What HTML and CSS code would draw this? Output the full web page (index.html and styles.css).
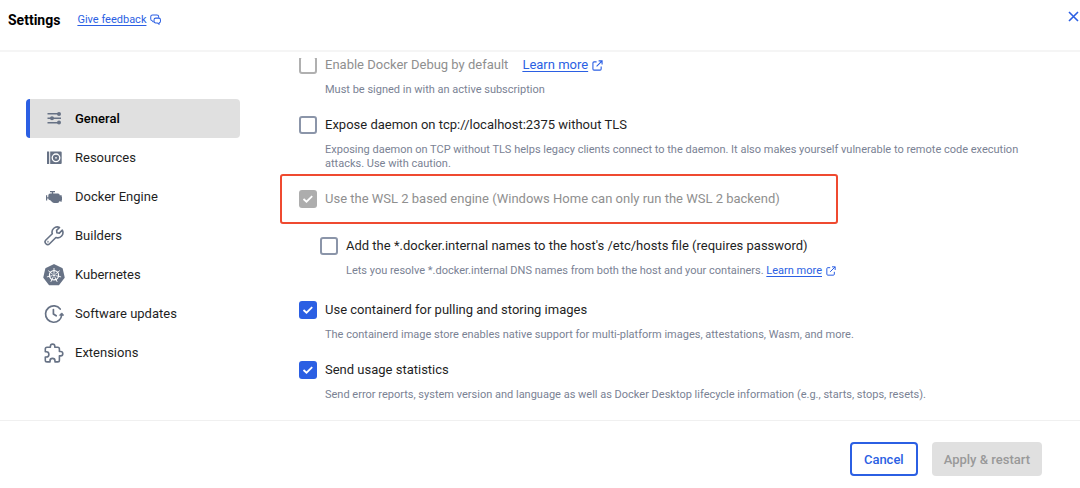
FILE: index.html
```html
<!DOCTYPE html>
<html lang="en">
<head>
    <meta charset="UTF-8">
    <meta name="viewport" content="width=device-width, initial-scale=1.0">
    <title>Settings</title>
    <link rel="stylesheet" href="styles.css">
</head>
<body>
    <svg class="sprite" aria-hidden="true">
        <symbol id="external" viewBox="0 0 12 12">
            <path d="M5 2H2.200Q1 2 1 3.200V9.800Q1 11 2.200 11H8.800Q10 11 10 9.800V7M7.200 1H11V4.800M11 1L5 7" fill="none" stroke="currentColor" stroke-width="1.200"/>
        </symbol>
    </svg>

    <header class="header">
        <h1 class="title">Settings</h1>
        <a class="link feedback" href="#"><span>Give feedback</span>
            <svg width="11" height="11" viewBox="0 0 12 12" fill="none" stroke="currentColor" stroke-width="1.100" stroke-linejoin="round">
                <path d="M3.800 8.800L2.500 7.500Q.8 7.200.8 5.500V3Q.8 1 2.800 1H7.500Q9.500 1 9.500 3V4"/>
                <path d="M6.200 4.500H9.500Q11.400 4.500 11.400 6.300V7.800Q11.400 9.500 10 9.600V11.300L8 9.700H6.200Q4.400 9.700 4.400 7.900V6.300Q4.400 4.500 6.200 4.500Z"/>
            </svg>
        </a>
        <button class="close" type="button" aria-label="Close">
            <svg width="11" height="11" viewBox="0 0 11 11" fill="none" stroke="currentColor" stroke-width="1.600"><path d="M1 1L10 10M10 1L1 10"/></svg>
        </button>
    </header>

    <main class="main">
        <nav class="nav">
            <a class="nav-item active" href="#">
                <svg class="icon" viewBox="0 0 20 20" fill="currentColor">
                    <path d="M3.500 4h11v1.400h-11zM3.500 8.500h13.500v1.400h-13.500zM3.500 13h11v1.400h-11z"/>
                    <circle cx="15" cy="4.900" r="2"/>
                    <circle cx="8" cy="9.200" r="2"/>
                    <circle cx="15" cy="13.500" r="2"/>
                </svg>
                General
            </a>
            <a class="nav-item" href="#">
                <svg class="icon" viewBox="0 0 20 20">
                    <path d="M3 3.500h2.200v12.500H3zM6.200 3.500h10.500q1 0 1 1v10.500q0 1-1 1H6.200z" fill="currentColor"/>
                    <circle cx="12" cy="9.800" r="3.800" fill="none" stroke="#fff" stroke-width="1.300"/>
                    <circle cx="12" cy="9.800" r=".9" fill="#fff"/>
                </svg>
                Resources
            </a>
            <a class="nav-item" href="#">
                <svg class="icon" viewBox="0 0 20 20" fill="currentColor">
                    <path d="M6 4h5v1.200H9.200v1.400H14q1.600.2 1.900 1.900h.6V8h1v1.500h.5v4h-.5V15h-1v-1h-.8Q15 16 13.300 16H10.500Q9 16 7.800 14.700L6.300 13.200Q4.300 13.200 4.300 11.500H3.200v2H2V8.300h1.200v2h1.100V8.500Q4.400 6.700 6.200 6.600H7.800V5.200H6z"/>
                </svg>
                Docker Engine
            </a>
            <a class="nav-item" href="#">
                <svg class="icon" viewBox="0 0 20 20" fill="none" stroke="currentColor" stroke-width="1.600" stroke-linejoin="round" stroke-linecap="round">
                    <path d="M15.500 1.500A5.200 5.200 0 0 0 8.300 7.800L1.900 14A2.600 2.600 0 0 0 5.600 17.700L11.900 11.500A5.200 5.200 0 0 0 18.300 4.200L15.300 7.100L12.900 6.800L12.600 4.400Z"/>
                    <circle cx="3.900" cy="15.800" r=".2"/>
                </svg>
                Builders
            </a>
            <a class="nav-item" href="#">
                <svg class="icon kubernetes" viewBox="0 0 22 22">
                    <path d="M11 1L18.800 4.700L20.800 13.400L15.400 20.400H6.600L1.200 13.400L3.200 4.700Z" fill="currentColor" stroke="currentColor" stroke-width="1.800" stroke-linejoin="round"/>
                    <g fill="none" stroke="#fff" stroke-width=".9">
                        <circle cx="11" cy="11.300" r="4.600" stroke-width="1.200"/>
                        <path d="M11 9.800V4M12.200 10.300L16.700 6.700M12.500 11.600L18.100 12.900M11.700 12.700L14.200 17.900M10.300 12.700L7.800 17.900M9.500 11.600L3.900 12.900M9.800 10.300L5.300 6.700"/>
                    </g>
                    <circle cx="11" cy="11.300" r="1" fill="#fff"/>
                </svg>
                Kubernetes
            </a>
            <a class="nav-item" href="#">
                <svg class="icon" viewBox="0 0 20 20" fill="none" stroke="currentColor" stroke-width="1.700" stroke-linecap="round" stroke-linejoin="round">
                    <path d="M16.200 5A8.200 8.200 0 1 0 15.200 16.200Q17.300 14.300 17.600 11.500M9.400 5.500V10L12.200 11.800"/>
                    <path d="M15.800 11L17.700 8.900L19.400 11Z" fill="currentColor" stroke-width="1"/>
                </svg>
                Software updates
            </a>
            <a class="nav-item" href="#">
                <svg class="icon" viewBox="0 0 20 20" fill="none" stroke="currentColor" stroke-width="1.600" stroke-linejoin="round">
                    <path d="M6.400 4.300V3.300A2.200 2.200 0 0 1 10.800 3.300V4.300H13.700Q15.400 4.300 15.400 6V8.500H16.600A2.200 2.200 0 0 1 16.600 12.900H15.400V17.200Q15.400 18.900 13.700 18.900H11V17.900A2.500 2.500 0 0 0 6 17.900V18.900H3Q1.300 18.900 1.300 17.200V14H2.300A2.600 2.600 0 0 0 2.300 8.800H1.300V6Q1.300 4.300 3 4.300Z"/>
                </svg>
                Extensions
            </a>
        </nav>

        <section class="content">
            <div class="options">
                <div class="option">
                    <div class="option-row">
                        <label class="check disabled"><input type="checkbox" disabled>Enable Docker Debug by default</label>
                        <a class="link" href="#"><span>Learn more</span><svg width="11" height="11"><use href="#external"/></svg></a>
                    </div>
                    <p class="hint">Must be signed in with an active subscription</p>
                </div>

                <div class="option">
                    <label class="check"><input type="checkbox">Expose daemon on tcp://localhost:2375 without TLS</label>
                    <p class="hint">Exposing daemon on TCP without TLS helps legacy clients connect to the daemon. It also makes yourself vulnerable to remote code execution attacks. Use with caution.</p>
                </div>

                <div class="highlight">
                    <label class="check disabled"><input type="checkbox" checked disabled>Use the WSL 2 based engine (Windows Home can only run the WSL 2 backend)</label>
                </div>

                <div class="option nested">
                    <label class="check"><input type="checkbox">Add the *.docker.internal names to the host's /etc/hosts file (requires password)</label>
                    <p class="hint">Lets you resolve *.docker.internal DNS names from both the host and your containers. <a class="link" href="#"><span>Learn more</span><svg width="10" height="10"><use href="#external"/></svg></a></p>
                </div>

                <div class="option">
                    <label class="check"><input type="checkbox" checked>Use containerd for pulling and storing images</label>
                    <p class="hint">The containerd image store enables native support for multi-platform images, attestations, Wasm, and more.</p>
                </div>

                <div class="option">
                    <label class="check"><input type="checkbox" checked>Send usage statistics</label>
                    <p class="hint">Send error reports, system version and language as well as Docker Desktop lifecycle information (e.g., starts, stops, resets).</p>
                </div>
            </div>
        </section>
    </main>

    <footer class="footer">
        <button class="btn btn-outline" type="button">Cancel</button>
        <button class="btn btn-disabled" type="button" disabled>Apply &amp; restart</button>
    </footer>
</body>
</html>
```

FILE: styles.css
```css
:root {
    --blue: #2b5fe3;
    --slate: #677285;
    --hint: #7a8294;
    --text: #1f1f1f;
    --muted: #8f8f8f;
    --line: #f0f0f0;
}

* {
    box-sizing: border-box;
    margin: 0;
    padding: 0;
}

body {
    height: 100vh;
    display: flex;
    flex-direction: column;
    background: #fff;
    color: var(--text);
    font-family: Roboto, "Liberation Sans", sans-serif;
    font-size: 13px;
    line-height: 20px;
}

.sprite {
    display: none;
}

/* header */
.header {
    display: flex;
    align-items: center;
    height: 52px;
    padding: 0 0 11px 8px;
    border-bottom: 2px solid #f5f5f5;
}

.title {
    font-size: 14px;
    font-weight: 700;
    color: #000;
}

.link {
    display: inline-flex;
    align-items: center;
    gap: 4px;
    color: var(--blue);
    text-decoration: none;
}

.link span {
    text-decoration: underline;
    text-underline-offset: 2px;
}

.feedback {
    margin-left: 17px;
    font-size: 11px;
}

.close {
    display: flex;
    margin: 0 1px 6px auto;
    border: none;
    background: none;
    color: var(--blue);
    cursor: pointer;
}

/* body */
.main {
    flex: 1;
    min-height: 0;
    display: flex;
    padding-top: 6px;
}

.nav {
    flex: 0 0 240px;
    padding: 41px 0 0 26px;
}

.nav-item {
    display: flex;
    align-items: center;
    gap: 11px;
    height: 39px;
    padding-left: 14px;
    border-left: 4px solid transparent;
    border-radius: 4px;
    color: var(--text);
    text-decoration: none;
}

.nav-item.active {
    border-left-color: var(--blue);
    background: #e0e0e0;
    color: #000;
    font-weight: 500;
}

.icon {
    flex: none;
    width: 20px;
    height: 20px;
    color: var(--slate);
}

.kubernetes {
    width: 22px;
    height: 22px;
    margin: 0 -1px;
}

.content {
    flex: 1;
    overflow: hidden;
    padding: 0 48px 0 59px;
}

/* list is scrolled slightly under the header */
.options {
    margin-top: -3px;
}

.option {
    padding-bottom: 18px;
}

.option-row {
    display: flex;
    gap: 14px;
}

.check {
    display: flex;
    align-items: center;
    gap: 8px;
}

.check.disabled {
    color: var(--muted);
}

.check input {
    appearance: none;
    flex: none;
    width: 18px;
    height: 18px;
    border: 2px solid #8b95a9;
    border-radius: 3px;
    background: #fff;
}

.check input:disabled {
    border-color: #b0b0b0;
}

.check input:checked {
    border: none;
    background: var(--blue) url("data:image/svg+xml;charset=UTF-8,%3csvg xmlns='http://www.w3.org/2000/svg' viewBox='0 0 18 18' fill='none' stroke='white' stroke-width='1.800'%3e%3cpath d='M4.500 9L7.500 11.700L13.200 6.200'/%3e%3c/svg%3e") center/18px;
}

.check input:checked:disabled {
    background-color: #adadad;
}

.hint {
    margin: 8px 0 0 26px;
    color: var(--hint);
    font-size: 11px;
    line-height: 14px;
}

.hint .link {
    line-height: 14px;
}

.highlight {
    display: flex;
    align-items: center;
    width: 558px;
    max-width: 100%;
    height: 50px;
    margin: -15px 0 12px -19px;
    padding-left: 17px;
    border: 2px solid #ef4a30;
    border-radius: 3px;
}

.nested {
    padding: 0 0 22px 21px;
}

/* footer */
.footer {
    display: flex;
    justify-content: flex-end;
    align-items: center;
    gap: 14px;
    height: 68px;
    padding: 9px 38px 0 0;
    border-top: 1px solid var(--line);
}

.btn {
    height: 34px;
    padding: 0 12px;
    border: none;
    border-radius: 4px;
    font-family: inherit;
    font-size: 13px;
    font-weight: 500;
    cursor: pointer;
}

.btn-outline {
    border: 2px solid var(--blue);
    background: #fff;
    color: var(--blue);
}

.btn-disabled {
    background: #e0e0e0;
    color: #999;
    cursor: default;
}
```
